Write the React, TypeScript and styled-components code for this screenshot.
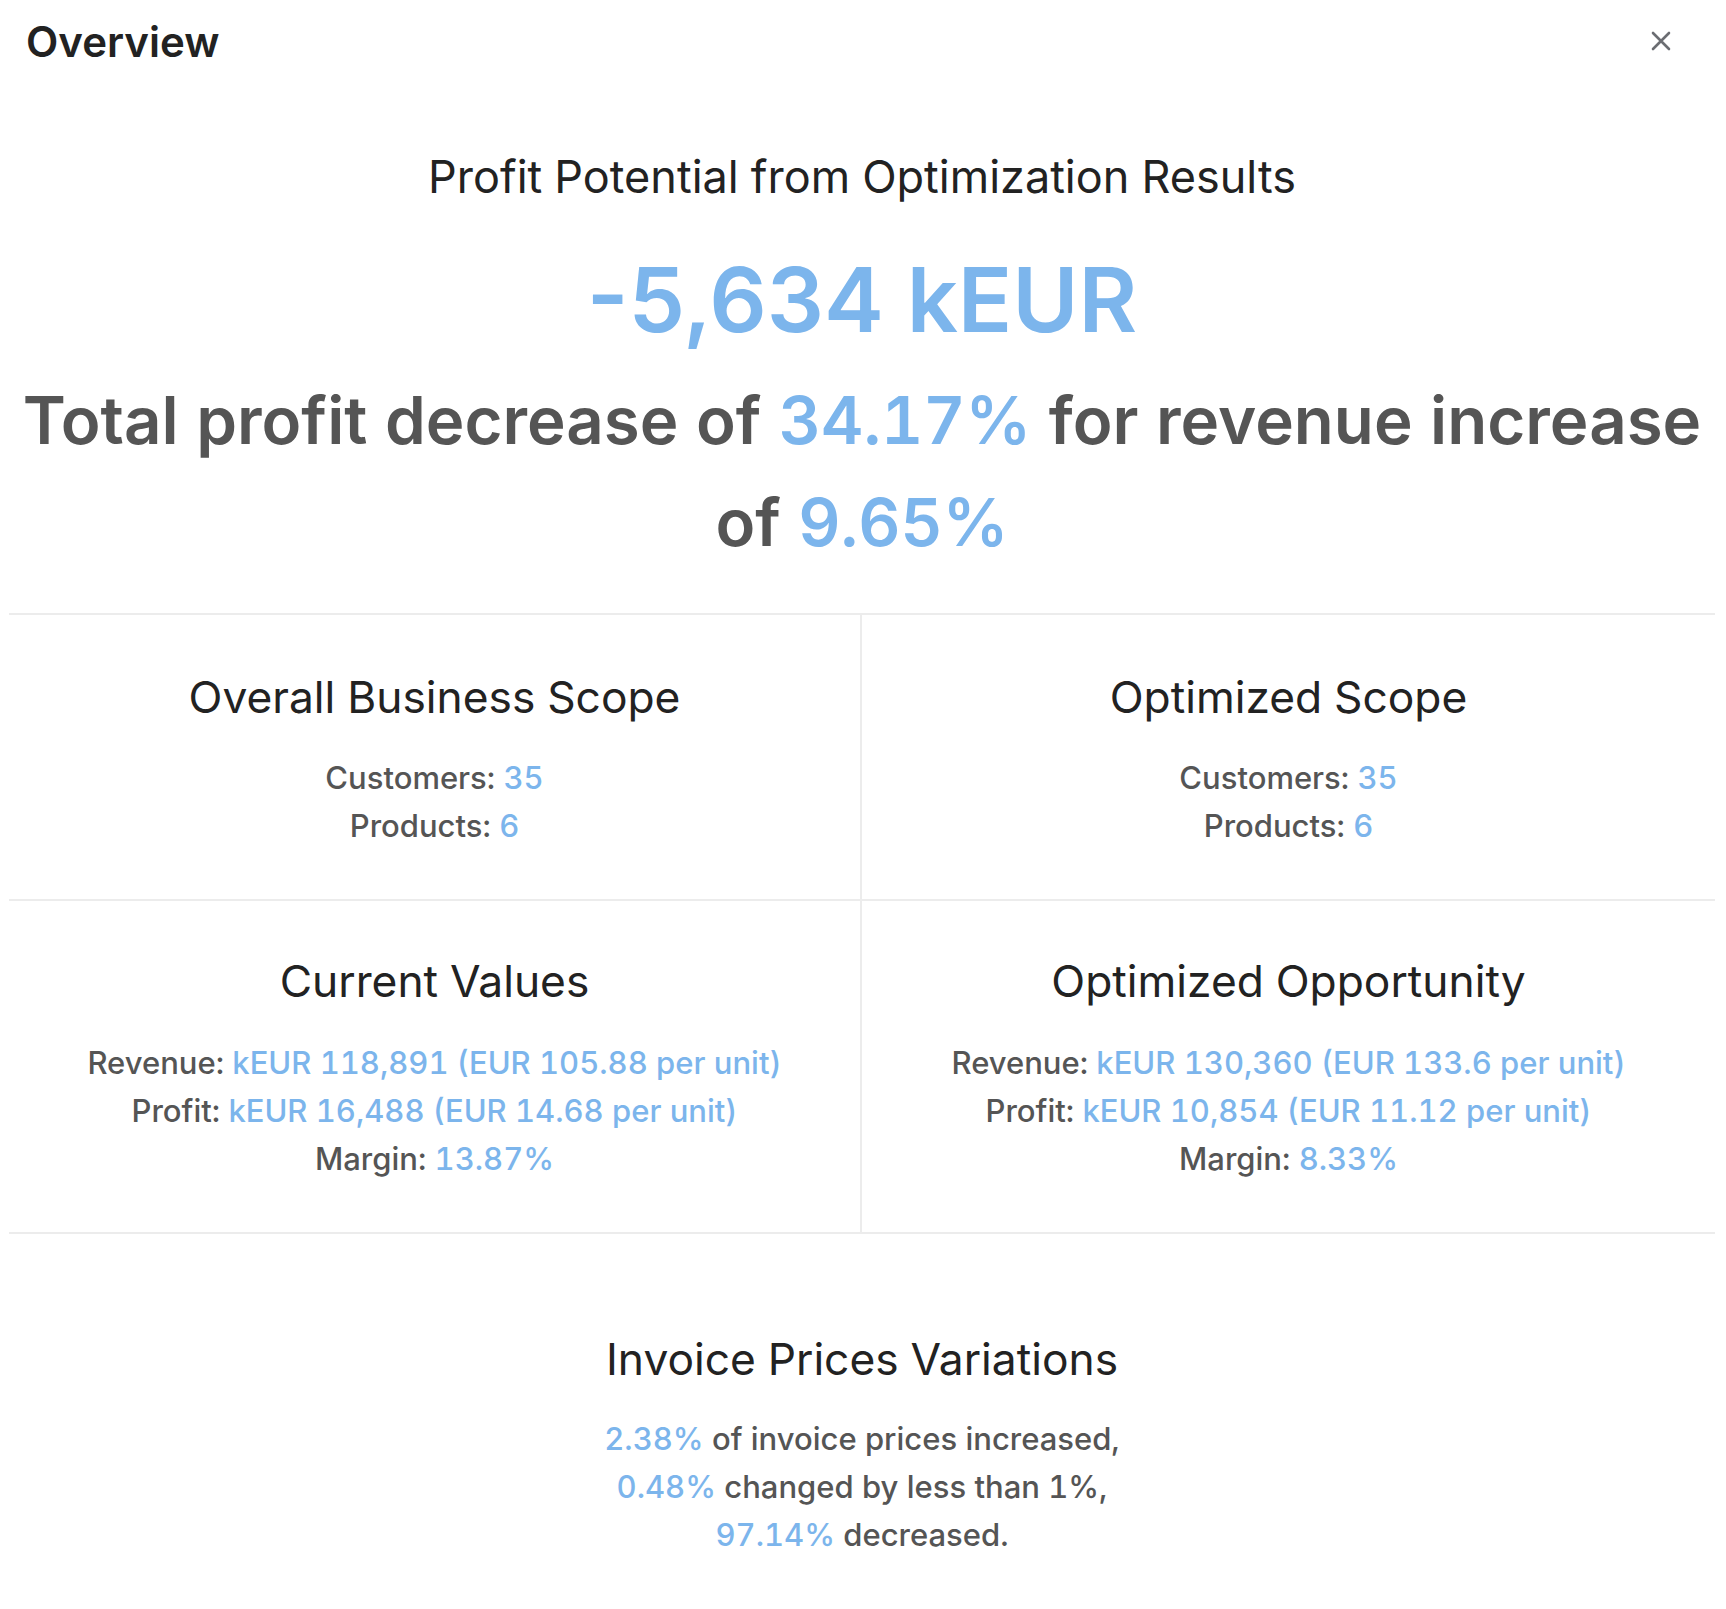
import React from 'react'
import styled, { createGlobalStyle } from 'styled-components'

const GlobalStyle = createGlobalStyle`
    body {
        margin: 0;
        background: #ffffff;
        font-family: Inter, "Noto Sans", "Liberation Sans", sans-serif;
        font-variant-numeric: tabular-nums;
    }
`

const BLUE = '#7cb5ec'
const DARK = '#222222'
const GRAY = '#555555'
const LINE = '#ececec'

const Page = styled.div`
    padding: 0 11px 0 9px;
`

const Header = styled.div`
    display: flex;
    align-items: center;
    justify-content: space-between;
    height: 82px;
    padding: 0 44px 0 17px;
`

const Title = styled.h1`
    margin: 0;
    font-size: 42px;
    font-weight: 600;
    color: ${DARK};
`

const CloseButton = styled.button`
    display: flex;
    padding: 0;
    border: 0;
    background: none;
    color: #6b6d72;
    cursor: pointer;
`

const Hero = styled.div`
    text-align: center;
    padding-top: 65px;
    padding-bottom: 39px;
    border-bottom: 2px solid ${LINE};
`

const Subtitle = styled.div`
    font-size: 45px;
    line-height: 60px;
    color: ${DARK};
`

const BigNumber = styled.div`
    margin-top: 39px;
    font-size: 90px;
    line-height: 108px;
    font-weight: 600;
    font-variant-numeric: normal;
    color: ${BLUE};
`

const Headline = styled.div`
    margin-top: 16px;
    font-size: 65.4px;
    line-height: 102px;
    font-weight: 600;
    color: ${GRAY};
`

const Value = styled.span`
    color: ${BLUE};
`

const Grid = styled.div`
    display: grid;
    grid-template-columns: 1fr 1fr;
`

const SectionTitle = styled.div`
    margin-bottom: 26px;
    font-size: 44.3px;
    line-height: 60px;
    color: ${DARK};
`

const Cell = styled.div<{ $left?: boolean; $top?: number; $gap?: number }>`
    text-align: center;
    padding-top: ${p => p.$top ?? 52}px;
    padding-bottom: 49px;
    border-bottom: 2px solid ${LINE};
    border-right: ${p => (p.$left ? `2px solid ${LINE}` : '0')};

    & > ${SectionTitle} {
        margin-bottom: ${p => p.$gap ?? 27}px;
    }
`

const Section = styled.div`
    text-align: center;
    padding-top: 95px;
    padding-bottom: 50px;
`

const Line = styled.div`
    font-size: 31px;
    line-height: 48px;
    font-weight: 500;
    color: ${GRAY};
`

const CloseIcon = () => (
    <svg width="20" height="20" viewBox="0 0 20 20" fill="none">
        <path
            d="M2 2 L18 18 M18 2 L2 18"
            stroke="currentColor"
            strokeWidth="2.6"
            strokeLinecap="round"
        />
    </svg>
)

export default function App() {
    return (
        <Page>
            <GlobalStyle />
            <Header>
                <Title>Overview</Title>
                <CloseButton aria-label="Close">
                    <CloseIcon />
                </CloseButton>
            </Header>

            <Hero>
                <Subtitle>Profit Potential from Optimization Results</Subtitle>
                <BigNumber>-5,634 kEUR</BigNumber>
                <Headline>
                    Total profit decrease of <Value>34.17%</Value> for revenue increase of{' '}
                    <Value>9.65%</Value>
                </Headline>
            </Hero>

            <Grid>
                <Cell $left>
                    <SectionTitle>Overall Business Scope</SectionTitle>
                    <Line>Customers: <Value>35</Value></Line>
                    <Line>Products: <Value>6</Value></Line>
                </Cell>
                <Cell>
                    <SectionTitle>Optimized Scope</SectionTitle>
                    <Line>Customers: <Value>35</Value></Line>
                    <Line>Products: <Value>6</Value></Line>
                </Cell>
                <Cell $left $top={50} $gap={28}>
                    <SectionTitle>Current Values</SectionTitle>
                    <Line>Revenue: <Value>kEUR 118,891 (EUR 105.88 per unit)</Value></Line>
                    <Line>Profit: <Value>kEUR 16,488 (EUR 14.68 per unit)</Value></Line>
                    <Line>Margin: <Value>13.87%</Value></Line>
                </Cell>
                <Cell $top={50} $gap={28}>
                    <SectionTitle>Optimized Opportunity</SectionTitle>
                    <Line>Revenue: <Value>kEUR 130,360 (EUR 133.6 per unit)</Value></Line>
                    <Line>Profit: <Value>kEUR 10,854 (EUR 11.12 per unit)</Value></Line>
                    <Line>Margin: <Value>8.33%</Value></Line>
                </Cell>
            </Grid>

            <Section>
                <SectionTitle>Invoice Prices Variations</SectionTitle>
                <Line><Value>2.38%</Value> of invoice prices increased,</Line>
                <Line><Value>0.48%</Value> changed by less than 1%,</Line>
                <Line><Value>97.14%</Value> decreased.</Line>
            </Section>
        </Page>
    )
}
